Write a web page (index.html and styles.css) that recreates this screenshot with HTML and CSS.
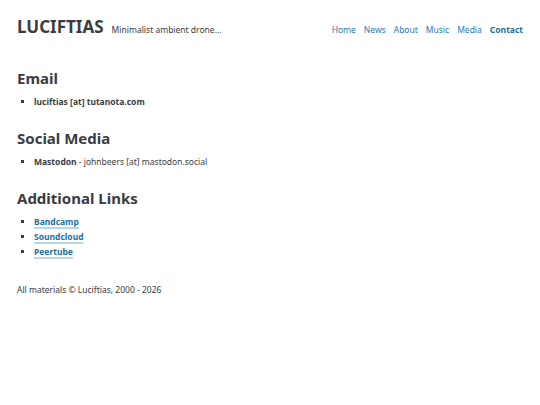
FILE: index.html
```html
<!DOCTYPE html>
<html lang="en">
<head>
  <meta charset="UTF-8">
  <title>Luciftias - Contact</title>
  <meta name="viewport" content="width=device-width, initial-scale=1.0">
  <link rel="stylesheet" href="styles.css">
</head>
<body>
  <header class="site-header">
    <div class="brand">
      <h1>LUCIFTIAS</h1>
      <span class="tagline">Minimalist ambient drone...</span>
    </div>
    <nav class="nav">
      <a href="#">Home</a>
      <a href="#">News</a>
      <a href="#">About</a>
      <a href="#">Music</a>
      <a href="#">Media</a>
      <a href="#" class="active">Contact</a>
    </nav>
  </header>

  <main>
    <section>
      <h2>Email</h2>
      <ul>
        <li><strong>luciftias [at] tutanota.com</strong></li>
      </ul>
    </section>

    <section>
      <h2>Social Media</h2>
      <ul>
        <li><strong>Mastodon</strong> - johnbeers [at] mastodon.social</li>
      </ul>
    </section>

    <section>
      <h2>Additional Links</h2>
      <ul class="links">
        <li><a href="#">Bandcamp</a></li>
        <li><a href="#">Soundcloud</a></li>
        <li><a href="#">Peertube</a></li>
      </ul>
    </section>
  </main>

  <footer class="site-footer">All materials &copy; Luciftias, 2000 - 2026</footer>
</body>
</html>
```

FILE: styles.css
```css
:root {
  --text: #3a3c42;
  --link: #1f6fa0;
  --nav: #2b7bb0;
  --underline: #b9d6e8;
}

body {
  margin: 0;
  padding: 15px 17px 14px;
  font-family: 'Noto Sans', 'Open Sans', sans-serif;
  font-size: 8.5px;
  color: var(--text);
  background: #fff;
}

.site-header {
  display: flex;
  align-items: baseline;
  justify-content: space-between;
}

.brand {
  display: flex;
  align-items: baseline;
  gap: 8px;
}

.brand h1 {
  margin: 0;
  font-size: 17px;
  line-height: 24px;
  font-weight: 700;
}

.tagline {
  font-size: 8.5px;
}

.nav {
  display: flex;
  gap: 8px;
  font-size: 8.5px;
}

.nav a {
  color: var(--nav);
  text-decoration: none;
}

.nav a.active {
  color: var(--link);
  font-weight: 700;
}

main {
  margin-top: 29px;
}

section {
  margin-bottom: 19px;
}

h2 {
  margin: 0 0 6px;
  font-size: 15px;
  line-height: 20px;
  font-weight: 700;
}

ul {
  margin: 0;
  padding-left: 17px;
  list-style: square;
}

li {
  line-height: 15px;
}

.links a {
  color: var(--link);
  font-weight: 700;
  text-decoration: underline;
  text-decoration-color: var(--underline);
  text-decoration-thickness: 2px;
  text-underline-offset: 2px;
}

.site-footer {
  margin-top: 24px;
  line-height: 13px;
}
```
